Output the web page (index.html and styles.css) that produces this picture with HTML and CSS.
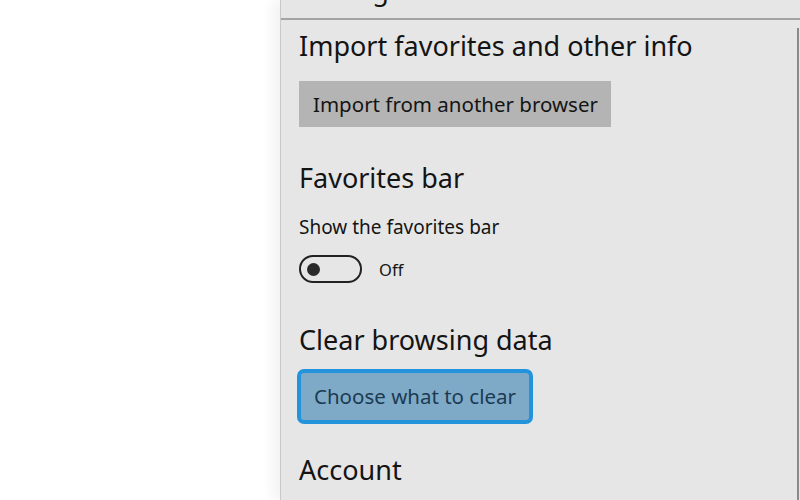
FILE: index.html
```html
<!DOCTYPE html>
<html>
<head>
<meta charset="utf-8">
<link rel="stylesheet" href="styles.css">
</head>
<body>
<div class="page">
  <div class="blank"></div>
  <div class="panel">
    <div class="panel-header"><h1 class="panel-title">Settings</h1></div>
    <div class="panel-body">
      <h2 class="section-title first">Import favorites and other info</h2>
      <button class="btn btn-gray">Import from another browser</button>

      <h2 class="section-title">Favorites bar</h2>
      <div class="setting-label">Show the favorites bar</div>
      <div class="toggle-row">
        <span class="toggle"><span class="knob"></span></span>
        <span class="toggle-state">Off</span>
      </div>

      <h2 class="section-title">Clear browsing data</h2>
      <button class="btn btn-focus">Choose what to clear</button>

      <h2 class="section-title">Account</h2>
    </div>
  </div>
</div>
</body>
</html>
```

FILE: styles.css
```css
* { box-sizing: border-box; }
html, body { margin: 0; padding: 0; }
body {
  width: 800px;
  height: 500px;
  overflow: hidden;
  background: #ffffff;
  font-family: "Noto Sans", "Open Sans", sans-serif;
  color: #141414;
}
.page {
  display: flex;
  height: 500px;
}
.blank {
  width: 280px;
  flex: none;
  background: #ffffff;
}
.panel {
  flex: 1;
  position: relative;
  background: #e6e6e6;
  border-left: 1px solid #c9c9c9;
  box-shadow: -8px 0 12px rgba(0,0,0,0.05);
  overflow: hidden;
}
.panel::after {
  content: "";
  position: absolute;
  right: 1px;
  top: 28px;
  bottom: 0;
  width: 2px;
  background: #8a8a8a;
}
.panel-header {
  height: 20px;
  border-bottom: 2px solid #a3a3a3;
  overflow: hidden;
  padding-left: 18px;
}
.panel-title {
  margin: -27px 0 0 0;
  font-size: 27px;
  font-weight: 400;
  line-height: 34px;
}
.panel-body {
  padding: 0 0 0 18px;
}
.section-title {
  margin: 0;
  font-size: 27px;
  font-weight: 400;
  line-height: 34px;
}
.section-title.first { margin-top: 9px; }
.btn {
  display: block;
  font-family: inherit;
  font-size: 20.5px;
  line-height: 46px;
  height: 46px;
  padding: 0 13px 0 14px;
  border: none;
  border-radius: 0;
  color: #141414;
  margin-top: 18px;
  margin-bottom: 34px;
}
.btn-gray {
  background: #b4b4b4;
}
.btn-focus {
  margin-left: -2px;
  height: 55px;
  line-height: 47px;
  padding: 0 13px;
  background: #7eaac8;
  border: 4px solid #2393dc;
  border-radius: 7px;
  color: #1c3b52;
  margin-top: 12px;
  margin-bottom: 29px;
}
.setting-label {
  margin-top: 20px;
  font-size: 19px;
  line-height: 24px;
}
.toggle-row {
  display: flex;
  align-items: center;
  gap: 17px;
  margin-top: 16px;
  margin-bottom: 40px;
}
.toggle {
  display: flex;
  align-items: center;
  width: 63px;
  height: 28px;
  border: 2.5px solid #222;
  border-radius: 14px;
  padding-left: 6px;
}
.knob {
  width: 13px;
  height: 13px;
  border-radius: 50%;
  background: #2a2a2a;
}
.toggle-state {
  font-size: 16.5px;
}
```
